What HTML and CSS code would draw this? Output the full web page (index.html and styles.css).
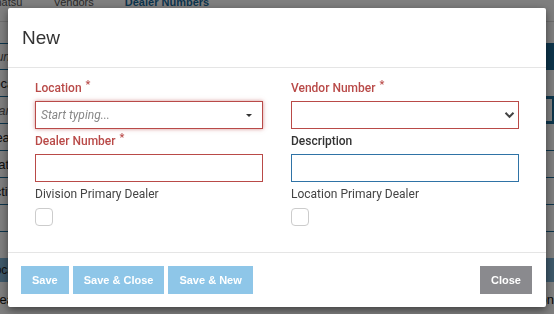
FILE: index.html
```html
<!DOCTYPE html>
<html lang="en">

<head>
    <meta charset="UTF-8">
    <meta name="viewport" content="width=device-width, initial-scale=1.0">
    <title>Dealer Numbers</title>
    <link rel="stylesheet" href="styles.css">
</head>

<body>
    <div class="page">
        <nav class="tabs">
            <span class="tab first">Komatsu</span>
            <span class="tab">Vendors</span>
            <span class="tab active">Dealer Numbers</span>
        </nav>
        <div class="toolbar">
            <span class="search">Run report</span>
            <span class="toolbar-btn">Add</span>
        </div>
        <div class="filters">
            <div class="filter-row">Location</div>
            <div class="filter-row italic">Start typing <span class="box"></span></div>
            <div class="filter-row">Dealer</div>
            <div class="filter-row">Status</div>
            <div class="filter-row">Active</div>
            <div class="filter-row"></div>
        </div>
        <div class="table-head">Location</div>
        <div class="table-row"><span>Dealer Number</span><span>Description</span></div>
    </div>

    <div class="overlay"></div>

    <div class="modal">
        <div class="modal-header">
            <h2>New</h2>
        </div>

        <div class="modal-body">
            <div class="field">
                <label class="required">Location</label>
                <div class="input combo error focus">
                    <span class="placeholder">Start typing...</span>
                    <span class="caret"></span>
                </div>
            </div>
            <div class="field">
                <label class="required">Vendor Number</label>
                <div class="input select error">
                    <svg class="chevron" width="11" height="8" viewBox="0 0 11 8">
                        <path d="M1.5 1.8 L5.5 5.8 L9.5 1.8" fill="none" stroke="#444" stroke-width="2"/>
                    </svg>
                </div>
            </div>
            <div class="field">
                <label class="required">Dealer Number</label>
                <div class="input error"></div>
            </div>
            <div class="field">
                <label>Description</label>
                <div class="input active"></div>
            </div>
            <div class="field">
                <label class="plain">Division Primary Dealer</label>
                <span class="checkbox"></span>
            </div>
            <div class="field">
                <label class="plain">Location Primary Dealer</label>
                <span class="checkbox"></span>
            </div>
        </div>

        <div class="modal-footer">
            <div class="actions">
                <button class="btn primary">Save</button>
                <button class="btn primary">Save &amp; Close</button>
                <button class="btn primary">Save &amp; New</button>
            </div>
            <button class="btn secondary">Close</button>
        </div>
    </div>
</body>

</html>
```

FILE: styles.css
```css
body {
    font-family: 'Liberation Sans', Arial, sans-serif;
    margin: 0;
    background: #fff;
    color: #333;
    font-size: 12px;
    overflow: hidden;
    height: 314px;
}

/* background page */
.page {
    width: 554px;
}

.tabs {
    display: flex;
    gap: 31px;
    height: 22px;
    border-bottom: 1px solid #ddd;
    box-sizing: border-box;
    font-size: 11px;
    line-height: 12px;
    color: #555;
    white-space: nowrap;
}

.tab {
    margin-top: -4px;
}

.tab.first {
    margin-left: -21px;
}

.tab.active {
    color: #17699a;
    font-weight: bold;
}

.toolbar {
    display: flex;
    justify-content: space-between;
    align-items: center;
    margin-top: 21px;
    height: 27px;
    box-sizing: border-box;
    border-top: 1px solid #1b6a96;
    border-bottom: 1px solid #1b6a96;
}

.search {
    font-style: italic;
    color: #555;
    margin-left: -12px;
}

.toolbar-btn {
    background: #1b6a96;
    color: #fff;
    height: 100%;
    width: 60px;
}

.filter-row {
    display: flex;
    justify-content: space-between;
    align-items: center;
    height: 27px;
    box-sizing: border-box;
    border-bottom: 1px solid #1b6a96;
    margin-left: -14px;
    color: #222;
    font-size: 13px;
}

.filter-row.italic {
    font-style: italic;
    color: #666;
}

.box {
    width: 60px;
    height: 26px;
    box-sizing: border-box;
    border: 2px solid #1b6a96;
}

.table-head {
    margin-top: 26px;
    height: 24px;
    line-height: 24px;
    background: #7db3d6;
    color: #222;
    text-indent: -12px;
}

.table-row {
    display: flex;
    justify-content: space-between;
    height: 26px;
    line-height: 36px;
    margin-left: -10px;
    white-space: nowrap;
    font-size: 13px;
    color: #111;
    overflow: hidden;
}

.overlay {
    position: fixed;
    inset: 0;
    background: rgba(0, 0, 0, 0.5);
}

/* modal */
.modal {
    position: absolute;
    left: 8px;
    top: 8px;
    width: 538px;
    background: #fff;
    border-radius: 2px;
    box-shadow: 0 3px 9px rgba(0, 0, 0, 0.5);
}

.modal-header {
    height: 59px;
    border-bottom: 1px solid #e5e5e5;
    display: flex;
    align-items: center;
    padding-left: 14px;
}

.modal-header h2 {
    margin: 0;
    font-size: 19px;
    font-weight: normal;
    color: #333;
}

.modal-body {
    display: grid;
    grid-template-columns: 228px 228px;
    column-gap: 28px;
    padding: 12px 27px 26px;
    border-bottom: 1px solid #e5e5e5;
}

.field {
    display: flex;
    flex-direction: column;
}

.field label {
    font-family: Roboto, 'Liberation Sans', sans-serif;
    font-weight: 500;
    height: 16px;
    line-height: 16px;
    margin-bottom: 5px;
    color: #333;
}

.field label.required {
    color: #b94a48;
}

.field label.required::after {
    content: "*";
    position: relative;
    top: -4px;
    left: 4px;
    font-size: 11px;
    line-height: 0;
}

.field label.plain {
    font-weight: normal;
    color: #444;
    margin-bottom: 6px;
}

.input {
    height: 28px;
    box-sizing: border-box;
    border: 1px solid #ccc;
    margin-bottom: 4px;
    display: flex;
    align-items: center;
    padding: 0 5px;
}

.input.error {
    border-color: #b94a48;
}

.input.focus {
    box-shadow: 0 0 4px rgba(185, 74, 72, 0.6);
}

.input.active {
    border-color: #2f73a6;
}

.placeholder {
    font-family: Roboto, 'Liberation Sans', sans-serif;
    font-style: italic;
    color: #888;
    flex: 1;
}

.caret {
    width: 0;
    height: 0;
    border-left: 3px solid transparent;
    border-right: 3px solid transparent;
    border-top: 3px solid #333;
    margin-right: 5px;
}

.select {
    justify-content: flex-end;
}

.chevron {
    margin-right: -2px;
}

.checkbox {
    width: 18px;
    height: 18px;
    box-sizing: border-box;
    border: 1px solid #ccc;
    border-radius: 4px;
}

.modal-footer {
    display: flex;
    justify-content: space-between;
    padding: 13px 14px 13px 13px;
}

.actions {
    display: flex;
    gap: 4px;
}

.btn {
    height: 28px;
    border: none;
    padding: 0 11px;
    font-family: inherit;
    font-size: 11px;
    font-weight: bold;
    color: #fff;
    border-radius: 0;
}

.btn.primary {
    background: #8ec6e8;
}

.btn.secondary {
    background: #8a8a8e;
}
```
